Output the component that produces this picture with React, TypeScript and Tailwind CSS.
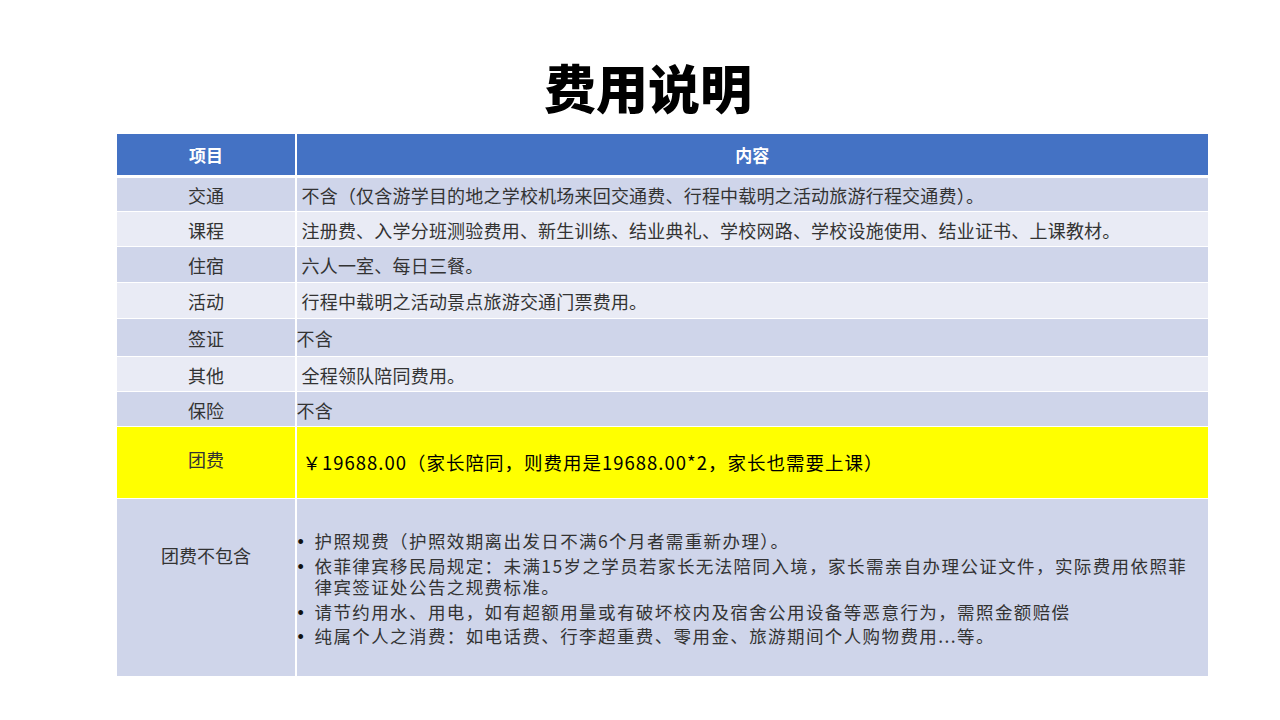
import React from "react";

const font = { fontFamily: '"Noto Sans CJK SC", "Noto Sans", sans-serif' };

type Row = { label: string; content: string; h: string; bg: string; pl: string };

const rows: Row[] = [
  { label: "交通", content: "不含（仅含游学目的地之学校机场来回交通费、行程中载明之活动旅游行程交通费）。", h: "h-[33px]", bg: "bg-[#cfd5ea]", pl: "pl-[5px]" },
  { label: "课程", content: "注册费、入学分班测验费用、新生训练、结业典礼、学校网路、学校设施使用、结业证书、上课教材。", h: "h-[34px]", bg: "bg-[#e9ebf5]", pl: "pl-[5px]" },
  { label: "住宿", content: "六人一室、每日三餐。", h: "h-[35px]", bg: "bg-[#cfd5ea]", pl: "pl-[5px]" },
  { label: "活动", content: "行程中载明之活动景点旅游交通门票费用。", h: "h-[35px]", bg: "bg-[#e9ebf5]", pl: "pl-[5px]" },
  { label: "签证", content: "不含", h: "h-[37px]", bg: "bg-[#cfd5ea]", pl: "pl-[0px]" },
  { label: "其他", content: "全程领队陪同费用。", h: "h-[34px]", bg: "bg-[#e9ebf5]", pl: "pl-[5px]" },
  { label: "保险", content: "不含", h: "h-[34px]", bg: "bg-[#cfd5ea]", pl: "pl-[0px]" },
];

const items: string[][] = [
  ["护照规费（护照效期离出发日不满6个月者需重新办理）。"],
  ["依菲律宾移民局规定：未满15岁之学员若家长无法陪同入境，家长需亲自办理公证文件，实际费用依照菲", "律宾签证处公告之规费标准。"],
  ["请节约用水、用电，如有超额用量或有破坏校内及宿舍公用设备等恶意行为，需照金额赔偿"],
  ["纯属个人之消费：如电话费、行李超重费、零用金、旅游期间个人购物费用...等。"],
];

export default function App() {
  return (
    <div className="w-[1280px] h-[720px] bg-white overflow-hidden" style={font}>
      <div className="pt-[55px] pl-[16px] flex justify-center">
        <h1 className="text-[52px] leading-[64px] font-black text-black">费用说明</h1>
      </div>
      <div className="mt-[15px] ml-[117px] w-[1091px] flex flex-col bg-white">
        <div className="h-[41px] grid grid-cols-[178px_1fr] gap-[1.5px] bg-white mb-[3px]">
          <div className="bg-[#4472c4] flex items-center justify-center text-white font-bold text-[17px]">项目</div>
          <div className="bg-[#4472c4] flex items-center justify-center text-white font-bold text-[17px]">内容</div>
        </div>
        <div className="flex flex-col gap-px">
          {rows.map((r) => (
            <div key={r.label} className={`grid grid-cols-[178px_1fr] gap-[1.5px] ${r.h}`}>
              <div className={`${r.bg} flex items-center justify-center text-[18px] text-[#333333] pt-[2px]`}>{r.label}</div>
              <div className={`${r.bg} flex items-center text-[18px] tracking-[0.2px] text-[#333333] whitespace-nowrap pt-[2px] ${r.pl}`}>{r.content}</div>
            </div>
          ))}
          <div className="grid grid-cols-[178px_1fr] gap-[1.5px] h-[71px]">
            <div className="bg-[#ffff00] flex justify-center text-[18px] text-[#333333] pt-[19px]">团费</div>
            <div className="bg-[#ffff00] flex items-center text-[18.5px] tracking-[1px] text-black pl-[6px] pt-[1px] whitespace-nowrap">
              ￥19688.00（家长陪同，则费用是19688.00*2，家长也需要上课）
            </div>
          </div>
          <div className="grid grid-cols-[178px_1fr] gap-[1.5px] h-[177px]">
            <div className="bg-[#cfd5ea] flex justify-center text-[18px] text-[#333333] pt-[43px]">团费不包含</div>
            <div className="bg-[#cfd5ea] text-[17.5px] text-[#333333] pt-[31px] pl-[1px]">
              <ul className="flex flex-col gap-[3px]">
                {items.map((lines, i) => (
                  <li key={i} className="flex leading-[21.5px]">
                    <span className="w-[17px] h-[21.5px] shrink-0 flex items-center pt-[3px] leading-none text-[18px] text-[#111111]" style={{ fontFamily: '"Liberation Sans", sans-serif' }}>•</span>
                    <span className="whitespace-nowrap tracking-[1.4px]">
                      {lines.map((l, j) => (
                        <span key={j} className="block">{l}</span>
                      ))}
                    </span>
                  </li>
                ))}
              </ul>
            </div>
          </div>
        </div>
      </div>
    </div>
  );
}
